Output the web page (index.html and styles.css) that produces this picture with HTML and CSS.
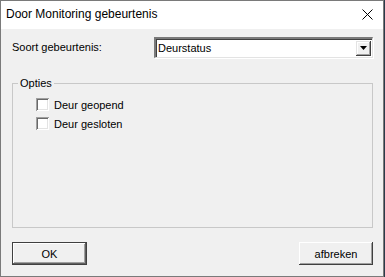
FILE: index.html
```html
<!DOCTYPE html>
<html lang="nl">
<head>
    <meta charset="UTF-8">
    <meta name="viewport" content="width=device-width, initial-scale=1.0">
    <title>Door Monitoring gebeurtenis</title>
    <link rel="stylesheet" href="styles.css">
</head>
<body>
<div class="window">
    <div class="titlebar">
        <span class="title">Door Monitoring gebeurtenis</span>
        <span class="close">
            <svg width="11" height="11" viewBox="0 0 11 11">
                <path d="M0.5 0.5 L10.5 10.5 M10.5 0.5 L0.5 10.5" stroke="#000" stroke-width="1" fill="none"/>
            </svg>
        </span>
    </div>
    <div class="content">
        <div class="field-row">
            <label class="field-label">Soort gebeurtenis:</label>
            <div class="combo">
                <span class="combo-value">Deurstatus</span>
                <span class="combo-btn">
                    <svg width="7" height="4" viewBox="0 0 7 4"><path d="M0 0 H7 L3.5 4 Z" fill="#000"/></svg>
                </span>
            </div>
        </div>
        <fieldset class="group">
            <legend>Opties</legend>
            <label class="check"><span class="box"></span>Deur geopend</label>
            <label class="check"><span class="box"></span>Deur gesloten</label>
        </fieldset>
        <div class="buttons">
            <button class="btn btn-default">OK</button>
            <button class="btn">afbreken</button>
        </div>
    </div>
</div>
</body>
</html>
```

FILE: styles.css
```css
html, body {
    margin: 0;
    padding: 0;
    background-color: #2b3a4a;
}
body {
    font-family: "Liberation Sans", Arial, sans-serif;
    font-size: 11px;
    color: #000;
}
.window {
    width: 382px;
    height: 275px;
    border: 1px solid #7a7a7a;
    background-color: #f0f0f0;
    display: flex;
    flex-direction: column;
}
.titlebar {
    height: 28px;
    background-color: #fff;
    display: flex;
    align-items: center;
    justify-content: space-between;
    padding: 0 10px 0 5px;
}
.title {
    font-size: 12px;
    margin-top: -2px;
}
.close {
    display: flex;
    margin-top: -1px;
}
.content {
    flex: 1;
    padding: 8px 10px 0 11px;
    display: flex;
    flex-direction: column;
}
.field-row {
    display: flex;
    align-items: center;
    justify-content: space-between;
}
.field-label {
    margin-top: -1px;
}
.combo {
    width: 213px;
    height: 17px;
    background-color: #fff;
    border-top: 2px solid;
    border-left: 2px solid;
    border-color: #7a7a7a;
    box-shadow: inset 1px 1px #404040, 1px 1px #fff;
    border-right: 1px solid #e3e3e3;
    border-bottom: 1px solid #e3e3e3;
    display: flex;
    align-items: center;
    justify-content: space-between;
    padding: 1px 1px 0 2px;
}
.combo-value {
    margin-top: -1px;
}
.combo-btn {
    width: 15px;
    height: 15px;
    margin-top: -1px;
    background-color: #f0f0f0;
    box-shadow: inset -1px -1px #404040, inset 1px 1px #e3e3e3, inset -2px -2px #a0a0a0, inset 2px 2px #fff;
    display: flex;
    align-items: center;
    justify-content: center;
}
.group {
    margin: 19px 0 0 0;
    padding: 8px 0 0 0;
    height: 141px;
    border: 1px solid #c8c8c8;
    display: flex;
    flex-direction: column;
    gap: 6px;
}
.group legend {
    padding: 0 2px;
    margin-left: 5px;
    line-height: 13px;
}
.check {
    display: flex;
    align-items: center;
    height: 13px;
    margin-left: 23px;
}
.box {
    width: 13px;
    height: 13px;
    box-sizing: border-box;
    background-color: #fff;
    box-shadow: inset 1px 1px #a0a0a0, inset -1px -1px #fff, inset 2px 2px #696969, inset -2px -2px #e3e3e3;
    margin-right: 5px;
}
.buttons {
    display: flex;
    justify-content: space-between;
    margin-top: 14px;
}
.btn {
    font-family: "Liberation Sans", Arial, sans-serif;
    font-size: 11px;
    color: #000;
    width: 74px;
    height: 23px;
    padding: 0;
    border: none;
    background-color: #f0f0f0;
    box-shadow: inset -1px -1px #404040, inset 1px 1px #fff, inset -2px -2px #a0a0a0, inset 2px 2px #f0f0f0;
}
.btn-default {
    width: 75px;
    border: 1px solid #404040;
    box-shadow: inset -1px -1px #606060, inset 1px 1px #fff, inset -2px -2px #a0a0a0;
}
```
